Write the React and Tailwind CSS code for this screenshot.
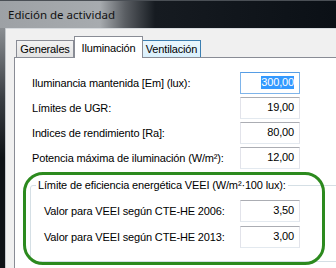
const rows = [
  { label: 'Iluminancia mantenida [Em] (lux):', value: '300,00', focused: true },
  { label: 'Límites de UGR:', value: '19,00' },
  { label: 'Indices de rendimiento [Ra]:', value: '80,00' },
  { label: 'Potencia máxima de iluminación (W/m²):', value: '12,00' },
]

const veei = [
  { label: 'Valor para VEEI según CTE-HE 2006:', value: '3,50' },
  { label: 'Valor para VEEI según CTE-HE 2013:', value: '3,00' },
]

function Field({ value, focused }) {
  return (
    <div
      className={`flex h-[22px] w-[60px] shrink-0 items-center justify-end border pb-[1px] pr-[5px] ${
        focused ? 'border-[#7eb4ea] border-t-[#569de5]' : 'border-[#e2e3ea] border-t-[#abadb3] border-b-[#e3e9ef]'
      }`}
    >
      <span className={`leading-[13px] ${focused ? 'bg-[#3399ff] text-white' : ''}`}>{value}</span>
    </div>
  )
}

export default function App() {
  return (
    <div className="relative flex h-[268px] w-[336px] flex-col overflow-hidden bg-[#0d1117] font-['Liberation_Sans',Arial,sans-serif] text-[11px] tracking-[-0.15px] text-black">
      <div className="flex h-[28px] shrink-0 items-center border-t border-[#4a4f55] bg-[linear-gradient(to_right,#9da1a5_0px,#a7abaf_100px,#5a5e63_125px,#161b21_155px,#0b1016_100%)] pl-[8px] font-['Noto_Sans',sans-serif] text-[11.5px] tracking-normal text-[#111]">
        Edición de actividad
      </div>

      <div className="flex flex-1">
        <div className="w-[6px] shrink-0 border-r border-[#c4c8cc] bg-[linear-gradient(to_bottom,#8a8e92_0px,#3a3e43_70px,#0e1216_130px)]" />

        <div className="flex flex-1 flex-col border-t border-[#d6dade] bg-[#f0f0f0] pl-[8px] pt-[7px]">
          <div className="ml-[2px] flex h-[21px] items-end">
            <div className="flex h-[17px] w-[58px] items-center justify-center border border-b-0 border-[#898c95] bg-[linear-gradient(to_bottom,#f2f2f2,#e3e3e3)]">
              Generales
            </div>
            <div className="relative z-10 -mb-px flex h-[22px] w-[69px] justify-center border border-b-0 border-[#898c95] bg-white pt-[3px]">
              Iluminación
            </div>
            <div className="flex h-[17px] w-[58px] items-center justify-center border border-b-0 border-l-0 border-[#3c7fb1] bg-[linear-gradient(to_bottom,#eaf6fd,#d9f0fc)]">
              Ventilación
            </div>
          </div>

          <div className="flex-1 border-l border-t border-[#898c95] bg-white pt-[14px]">
            <div className="flex flex-col gap-[3px] pl-[17px]">
              {rows.map((r) => (
                <div key={r.label} className="flex items-center">
                  <span className="w-[208px] shrink-0">{r.label}</span>
                  <Field value={r.value} focused={r.focused} />
                </div>
              ))}
            </div>

            <fieldset className="ml-[15px] mt-[10px] w-[330px] rounded-[3px] border border-[#d5dfe5] pb-[13px]">
              <legend className="ml-[5px] px-[2px] leading-[13px]">Límite de eficiencia energética VEEI (W/m²·100 lux):</legend>
              <div className="mt-[8px] flex flex-col gap-[4px] pl-[13px]">
                {veei.map((r) => (
                  <div key={r.label} className="flex items-center">
                    <span className="w-[196px] shrink-0">{r.label}</span>
                    <Field value={r.value} />
                  </div>
                ))}
              </div>
            </fieldset>
          </div>
        </div>
      </div>

      <div className="pointer-events-none absolute left-[23px] top-[172px] h-[93px] w-[302px] rounded-[20px] border-[3px] border-[#2c8a1e]" />
    </div>
  )
}
